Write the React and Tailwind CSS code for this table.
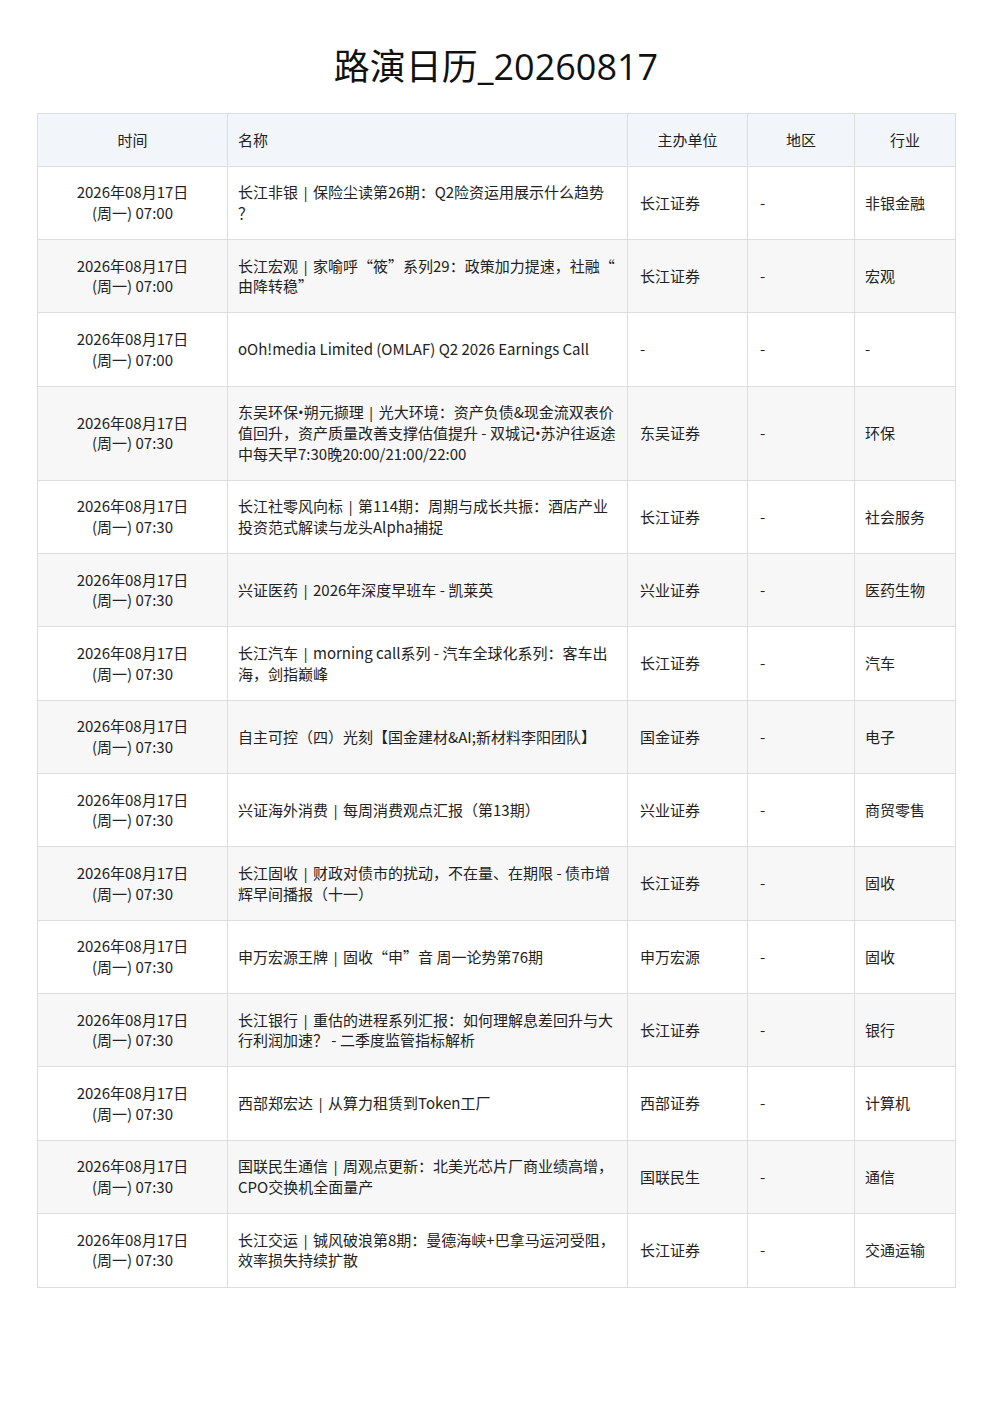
import React from "react";

const B = () => (
  <span
    className="inline-block w-[15px] text-center"
    style={{ fontFamily: '"Open Sans", sans-serif' }}
  >
    |
  </span>
);

const D = () => <span style={{ fontFamily: '"Open Sans", sans-serif' }}>•</span>;

const rows = [
  { t: "07:00", name: [<>长江非银<B />保险尘读第26期：Q2险资运用展示什么趋势</>, "？"], org: "长江证券", ind: "非银金融" },
  {
    t: "07:00",
    name: [<>长江宏观<B />家喻呼“筱”系列29：政策加力提速，社融“</>, "由降转稳”"],
    org: "长江证券",
    ind: "宏观",
  },
  { t: "07:00", name: ["oOh!media Limited (OMLAF) Q2 2026 Earnings Call"], org: "-", ind: "-" },
  {
    t: "07:30",
    name: [
      <>东吴环保<D />朔元撷理<B />光大环境：资产负债&amp;现金流双表价</>,
      <>值回升，资产质量改善支撑估值提升 - 双城记<D />苏沪往返途</>,
      "中每天早7:30晚20:00/21:00/22:00",
    ],
    org: "东吴证券",
    ind: "环保",
  },
  { t: "07:30", name: [<>长江社零风向标<B />第114期：周期与成长共振：酒店产业</>, "投资范式解读与龙头Alpha捕捉"], org: "长江证券", ind: "社会服务" },
  { t: "07:30", name: [<>兴证医药<B />2026年深度早班车 - 凯莱英</>], org: "兴业证券", ind: "医药生物" },
  { t: "07:30", name: [<>长江汽车<B />morning call系列 - 汽车全球化系列：客车出</>, "海，剑指巅峰"], org: "长江证券", ind: "汽车" },
  { t: "07:30", name: ["自主可控（四）光刻【国金建材&AI;新材料李阳团队】"], org: "国金证券", ind: "电子" },
  { t: "07:30", name: [<>兴证海外消费<B />每周消费观点汇报（第13期）</>], org: "兴业证券", ind: "商贸零售" },
  { t: "07:30", name: [<>长江固收<B />财政对债市的扰动，不在量、在期限 - 债市增</>, "辉早间播报（十一）"], org: "长江证券", ind: "固收" },
  { t: "07:30", name: [<>申万宏源王牌<B />固收“申”音 周一论势第76期</>], org: "申万宏源", ind: "固收" },
  { t: "07:30", name: [<>长江银行<B />重估的进程系列汇报：如何理解息差回升与大</>, "行利润加速？ - 二季度监管指标解析"], org: "长江证券", ind: "银行" },
  { t: "07:30", name: [<>西部郑宏达<B />从算力租赁到Token工厂</>], org: "西部证券", ind: "计算机" },
  { t: "07:30", name: [<>国联民生通信<B />周观点更新：北美光芯片厂商业绩高增，</>, "CPO交换机全面量产"], org: "国联民生", ind: "通信" },
  { t: "07:30", name: [<>长江交运<B />铖风破浪第8期：曼德海峡+巴拿马运河受阻，</>, "效率损失持续扩散"], org: "长江证券", ind: "交通运输" },
];

const cell = "border border-[#dddddd] py-[15.5px] px-2.5 align-middle";

export default function App() {
  return (
    <div
      className="w-[992px] min-h-[1403px] bg-white text-[#222222]"
      style={{ fontFamily: '"Noto Sans CJK SC", sans-serif' }}
    >
      <h1
        className="pt-[43px] h-[113px] text-center text-[36px] leading-[48px] text-[#111111] font-normal"
        style={{ fontFamily: '"Open Sans", "Noto Sans CJK SC", sans-serif' }}
      >
        路演日历_20260817
      </h1>
      <div className="px-[37px]">
        <table className="w-[918px] table-fixed border-collapse text-[15px] leading-[20.67px]">
          <colgroup>
            <col className="w-[190px]" />
            <col className="w-[400px]" />
            <col className="w-[120px]" />
            <col className="w-[107px]" />
            <col className="w-[101px]" />
          </colgroup>
          <thead>
            <tr className="bg-[#f2f6fb]">
              <th className={`${cell} font-normal text-center`}>时间</th>
              <th className={`${cell} font-normal text-left`}>名称</th>
              <th className={`${cell} font-normal text-center`}>主办单位</th>
              <th className={`${cell} font-normal text-center`}>地区</th>
              <th className={`${cell} font-normal text-center`}>行业</th>
            </tr>
          </thead>
          <tbody>
            {rows.map((r, i) => (
              <tr key={i} className={i % 2 === 1 ? "bg-[#f7f7f7]" : "bg-white"}>
                <td className={`${cell} text-center`}>
                  <div>2026年08月17日</div>
                  <div>(周一) {r.t}</div>
                </td>
                <td className={cell}>
                  {r.name.map((l, j) => (
                    <div key={j} className="whitespace-nowrap">{l}</div>
                  ))}
                </td>
                <td className={`${cell} pl-3`}>{r.org}</td>
                <td className={`${cell} pl-3`}>-</td>
                <td className={cell}>{r.ind}</td>
              </tr>
            ))}
          </tbody>
        </table>
      </div>
    </div>
  );
}
